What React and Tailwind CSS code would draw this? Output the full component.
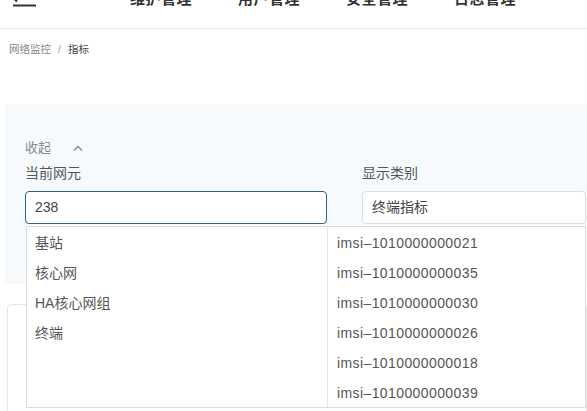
import { useState } from 'react'

const groups = ['基站', '核心网', 'HA核心网组', '终端']
const terminals = [
    'imsi–1010000000021',
    'imsi–1010000000035',
    'imsi–1010000000030',
    'imsi–1010000000026',
    'imsi–1010000000018',
    'imsi–1010000000039',
]
const menus = ['维护管理', '用户管理', '安全管理', '日志管理']

export default function App() {
    const [value] = useState('238')
    const [open] = useState(true)

    return (
        <div
            className="w-full h-[411px] overflow-hidden bg-white text-[#555]"
            style={{ fontFamily: '"Liberation Sans", "Noto Sans CJK SC", sans-serif' }}
        >
            {/* top navigation */}
            <header className="-mt-[29px] h-[58px] border-b border-[#ececec] flex items-center pl-[12px]">
                <svg className="-mt-[4px]" width="25" height="24" viewBox="0 0 25 24" fill="none" stroke="#333" strokeWidth="2">
                    <path d="M9 4h15M12 12h12M1 19.5h23" />
                    <path d="M5 8.5L1.5 12L5 15.5" />
                </svg>
                <nav className="flex ml-[93px] gap-[46px]">
                    {menus.map(m => (
                        <span key={m} className="text-[15px] font-bold text-[#333] tracking-[0.5px]">{m}</span>
                    ))}
                </nav>
            </header>

            {/* breadcrumb */}
            <div className="mt-[12px] px-[9px] text-[10.5px] leading-4 flex items-center">
                <span className="text-[#888]">网络监控</span>
                <span className="mx-[7px] text-[#999]">/</span>
                <span className="text-[#444]">指标</span>
            </div>

            {/* filter panel */}
            <section className="ml-[5px] mt-[47px] h-[180px] bg-[#f7fafd] pl-[20px] pt-[34px]">
                <div className="flex items-center h-5 text-[13px] text-[#888]">
                    <span>收起</span>
                    <svg className="ml-[22px]" width="10" height="7" viewBox="0 0 10 7" fill="none" stroke="#888" strokeWidth="1.3">
                        <path d="M1 5.5L5 1.5L9 5.5" />
                    </svg>
                </div>

                <div className="flex mt-[5px] gap-[35px]">
                    <div className="relative w-[302px] shrink-0">
                        <label className="block text-[14px] leading-5 text-[#555]">当前网元</label>
                        <div className="mt-[8px] h-[33px] rounded-[4px] border border-[#2b6389] bg-white flex items-center px-[9px] text-[14px] text-[#444]">
                            {value}
                        </div>

                        {open && (
                            <div className="absolute left-[1px] top-[63px] w-[560px] h-[182px] bg-white border border-[#dcdcdc] flex z-10 text-[14px] text-[#555]">
                                <ul className="w-[300px] shrink-0 pt-[1px]">
                                    {groups.map(g => (
                                        <li key={g} className="h-[30px] flex items-center pl-[8px]">{g}</li>
                                    ))}
                                </ul>
                                <ul className="flex-1 border-l border-[#e4e4e4] pt-[1px]">
                                    {terminals.map(t => (
                                        <li key={t} className="h-[30px] flex items-center pl-[9px] tracking-[0.4px]">{t}</li>
                                    ))}
                                </ul>
                            </div>
                        )}
                    </div>

                    <div className="w-[224px] shrink-0">
                        <label className="block text-[14px] leading-5 text-[#555]">显示类别</label>
                        <div className="mt-[8px] h-[33px] rounded-[4px] border border-[#dcdcdc] bg-white flex items-center px-[9px] text-[14px] text-[#444]">
                            终端指标
                        </div>
                    </div>
                </div>
            </section>

            {/* result card */}
            <div className="ml-[7px] mt-[20px] h-[200px] rounded-[4px] border border-[#e6e6e6] bg-white" />
        </div>
    )
}
